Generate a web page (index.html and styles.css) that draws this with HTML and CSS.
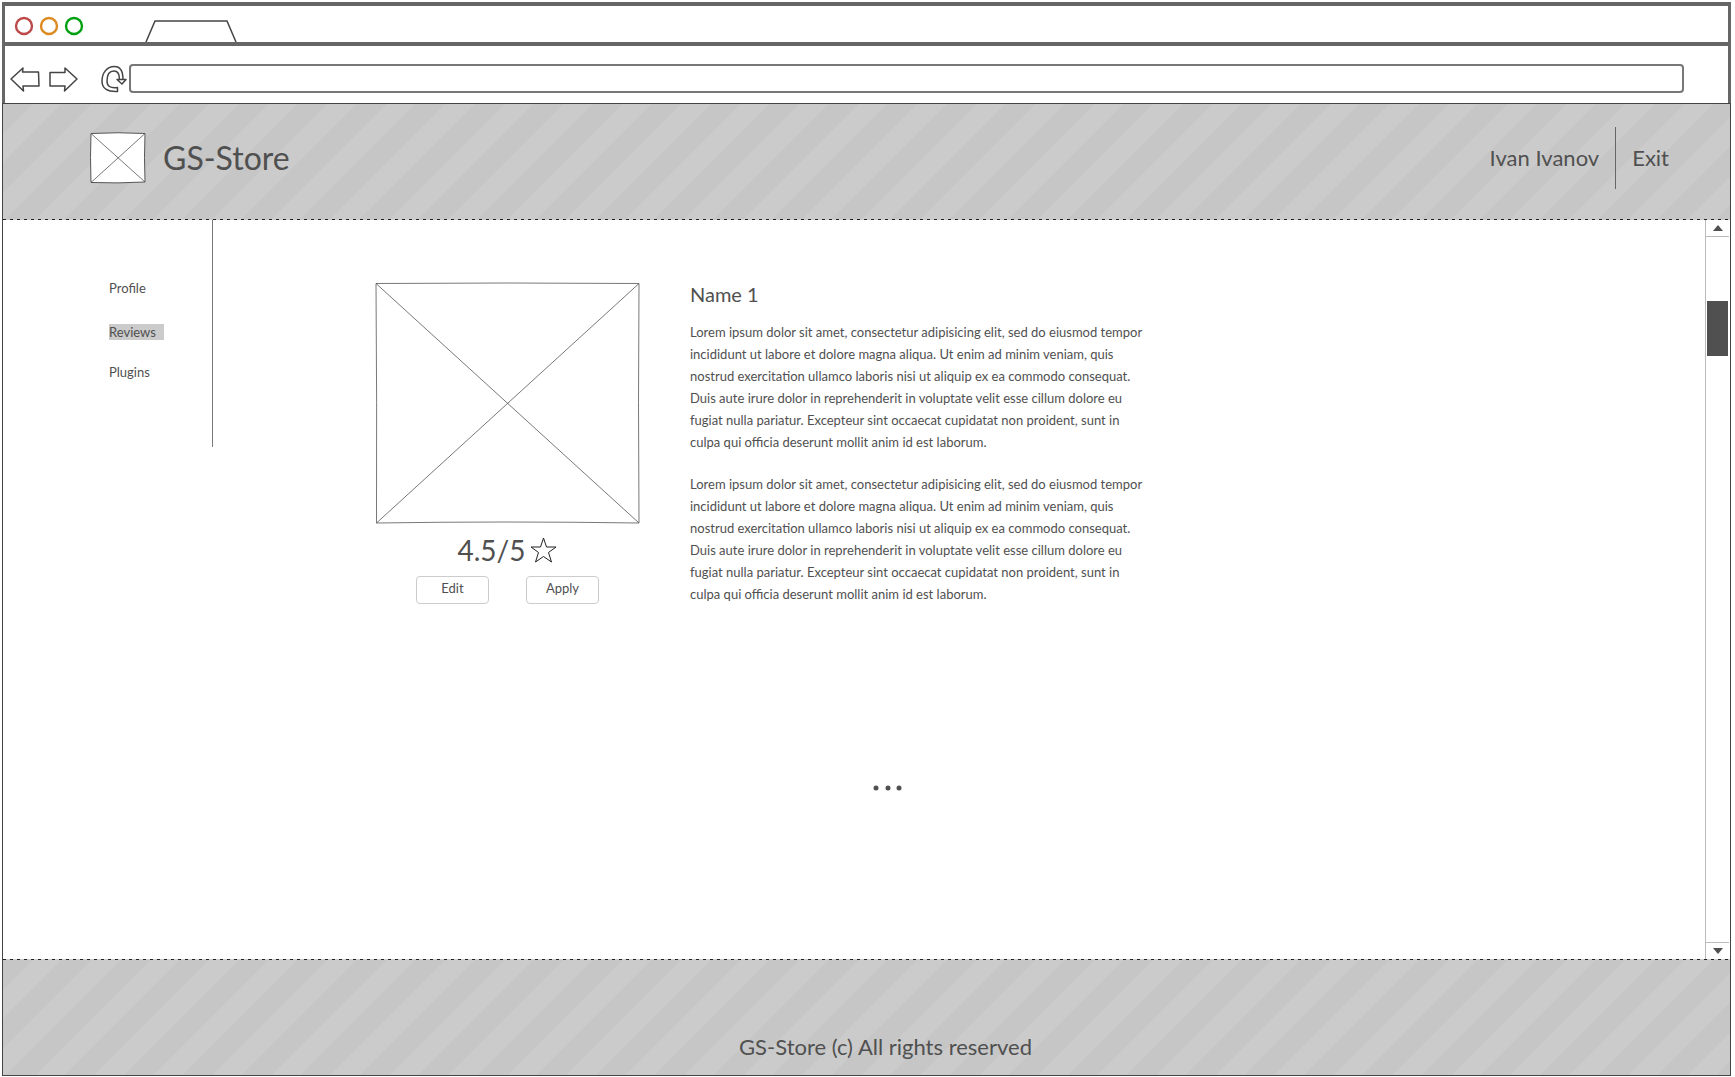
FILE: index.html
```html
<!DOCTYPE html>
<html lang="en">
<head>
<meta charset="utf-8">
<meta name="viewport" content="width=device-width, initial-scale=1">
<title>GS-Store</title>
<link rel="stylesheet" href="styles.css">
</head>
<body>
<div class="window">
  <div class="chrome">
    <div class="titlebar">
      <svg class="lights" width="70" height="20" viewBox="0 0 70 20" fill="none" stroke-width="2.4" aria-hidden="true">
        <circle cx="10" cy="10" r="8" stroke="#bd4a4a"/>
        <circle cx="35" cy="10" r="8" stroke="#dd8a20"/>
        <circle cx="60" cy="10" r="8" stroke="#00a010"/>
      </svg>
      <svg class="tab" width="92" height="22" viewBox="0 0 92 22" fill="none" stroke="#444" stroke-width="1.5" aria-hidden="true">
        <path d="M1 22 L10 1 H82 L91 22"/>
      </svg>
    </div>
    <div class="toolbar">
      <button class="tool" type="button" aria-label="Back">
        <svg width="30" height="26" viewBox="0 0 30 26"><path d="M1 13 L13 2 L12.500 6 H28.500 L29 20 H13 L13.500 25 Z"/></svg>
      </button>
      <button class="tool" type="button" aria-label="Forward">
        <svg width="30" height="26" viewBox="0 0 30 26"><path d="M29 13 L17 2 V6.500 H2 V20 H17 L16.500 25 Z"/></svg>
      </button>
      <button class="tool reload" type="button" aria-label="Reload">
        <svg width="28" height="28" viewBox="0 0 28 28"><path d="M17.500 26.500 V22.500 C10 23.500 7 21 7 16 C7 10 9 6 14 6 C18.500 6 19.500 10 19.500 14.500 H17 L22 19 L26 14.500 H23 C23 6 20 1.500 14.500 1.500 C6 1.500 2 9 2 16 C2 24 8 27 17.500 26.500 Z M17 14.500 H26"/></svg>
      </button>
      <input class="address" type="text" aria-label="Address">
    </div>
  </div>
  <div class="page">
    <header class="header striped">
      <svg class="logo" width="56" height="52" viewBox="0 0 56 52" fill="#fff" stroke="#555" aria-hidden="true">
        <path d="M1 1.500 Q28 0 55 1.500 Q54 25 55 50 Q28 51.500 1 50.500 Q0 25 1 1.500 Z"/>
        <path d="M1 1.500 L55 50 M55 1.500 L1 50.500" stroke-width=".8"/>
      </svg>
      <span class="brand">GS-Store</span>
      <div class="account">
        <a class="account-link" href="#">Ivan Ivanov</a>
        <a class="account-link exit" href="#">Exit</a>
      </div>
    </header>
    <div class="body">
      <nav class="menu">
        <a class="menu-link" href="#">Profile</a>
        <a class="menu-link current" href="#">Reviews</a>
        <a class="menu-link" href="#">Plugins</a>
      </nav>
      <main class="content">
        <article class="item">
          <div class="preview">
            <svg class="picture" width="265" height="242" viewBox="0 0 265 242" fill="none" stroke="#555" stroke-width=".8" aria-hidden="true">
              <path d="M1 1.500 Q130 .5 264 1.500 Q263 120 264 241 Q130 239 1.500 241 Q2 120 1 1.500 Z"/>
              <path d="M1 1.500 L264 241 M264 1.500 L1.500 241"/>
            </svg>
            <div class="rating">
              <span>4.5/5</span>
              <svg width="27" height="26" viewBox="0 0 27 26" fill="none" stroke="#222" aria-hidden="true"><path d="M13.500 1 L16.500 10 H26 L18.500 15.500 L21.500 25 L13.500 19.500 L5.500 25 L8.500 15.500 L1 10 H10.500 Z"/></svg>
            </div>
            <div class="actions">
              <button class="action" type="button">Edit</button>
              <button class="action" type="button">Apply</button>
            </div>
          </div>
          <div class="description">
            <h1 class="name">Name 1</h1>
            <p class="text">Lorem ipsum dolor sit amet, consectetur adipisicing elit, sed do eiusmod tempor<br>incididunt ut labore et dolore magna aliqua. Ut enim ad minim veniam, quis<br>nostrud exercitation ullamco laboris nisi ut aliquip ex ea commodo consequat.<br>Duis aute irure dolor in reprehenderit in voluptate velit esse cillum dolore eu<br>fugiat nulla pariatur. Excepteur sint occaecat cupidatat non proident, sunt in<br>culpa qui officia deserunt mollit anim id est laborum.</p>
            <p class="text">Lorem ipsum dolor sit amet, consectetur adipisicing elit, sed do eiusmod tempor<br>incididunt ut labore et dolore magna aliqua. Ut enim ad minim veniam, quis<br>nostrud exercitation ullamco laboris nisi ut aliquip ex ea commodo consequat.<br>Duis aute irure dolor in reprehenderit in voluptate velit esse cillum dolore eu<br>fugiat nulla pariatur. Excepteur sint occaecat cupidatat non proident, sunt in<br>culpa qui officia deserunt mollit anim id est laborum.</p>
          </div>
        </article>
        <svg class="more" width="30" height="6" viewBox="0 0 30 6" fill="#505050" role="img" aria-label="More items">
          <circle cx="3" cy="3" r="2.500"/><circle cx="15" cy="3" r="2.500"/><circle cx="26" cy="3" r="2.500"/>
        </svg>
      </main>
      <div class="scrollbar">
        <button class="scroll-button" type="button" aria-label="Scroll up"><svg width="10" height="6" viewBox="0 0 10 6"><path d="M5 0 L10 6 H0 Z"/></svg></button>
        <div class="track"><div class="thumb"></div></div>
        <button class="scroll-button down" type="button" aria-label="Scroll down"><svg width="10" height="6" viewBox="0 0 10 6"><path d="M0 0 H10 L5 6 Z"/></svg></button>
      </div>
    </div>
    <footer class="footer striped">GS-Store (c) All rights reserved</footer>
  </div>
</div>
</body>
</html>
```
FILE: styles.css
```css
* { box-sizing: border-box; }

body {
  margin: 0;
  background: #fff;
  color: #505050;
  font-family: Lato, "Liberation Sans", sans-serif;
  font-size: 13px;
}

a { color: inherit; text-decoration: none; }

button { padding: 0; color: inherit; font: inherit; }

svg { display: block; }

.window {
  display: flex;
  flex-direction: column;
  min-height: 100vh;
  padding: 2px 4px 1px 2px;
}

/* Browser frame */
.chrome { border: 3px solid #666; border-top-width: 4px; border-bottom: 0; }

.titlebar {
  display: flex;
  align-items: flex-end;
  gap: 61px;
  height: 40px;
  padding-left: 9px;
  border-bottom: 4px solid #666;
}

.lights { margin-bottom: 6px; }

.toolbar {
  display: flex;
  align-items: center;
  gap: 8px;
  height: 57px;
  padding: 8px 44px 0 5px;
}

.tool { border: 0; background: none; }
.tool svg { fill: #fff; stroke: #444; stroke-width: 1.5; stroke-linejoin: round; }
.reload { margin-left: 14px; margin-right: -8px; }

.address {
  flex: 1;
  min-width: 0;
  height: 29px;
  margin-left: 1px;
  padding: 0 8px;
  border: 2px solid #777;
  border-radius: 4px;
  background: #fff;
  font: inherit;
}

/* Site */
.page {
  display: flex;
  flex: 1;
  flex-direction: column;
  border: 1px solid #444;
}

.striped {
  background-color: #c6c6c6;
  background-image: linear-gradient(135deg, #c6c6c6 25%, #cbcbcb 25%, #cbcbcb 50%, #c6c6c6 50%, #c6c6c6 75%, #cbcbcb 75%);
  background-size: 59px 59px;
}

.header {
  display: flex;
  align-items: center;
  height: 115px;
  padding: 0 61px 8px 87px;
}

.brand { margin-left: 17px; font-size: 32px; }

.account { display: flex; align-items: center; margin-left: auto; }
.account-link { font-size: 22px; line-height: 62px; }
.exit { margin-left: 16px; padding-left: 16px; border-left: 1px solid #666; }

/* Fine dashed rules along the top and bottom edges */
.body {
  display: flex;
  flex: 1;
  padding: 1px 0;
  background-image:
    repeating-linear-gradient(90deg, #222 0 3px, #ccc 3px 7px),
    repeating-linear-gradient(90deg, #222 0 3px, #ccc 3px 7px);
  background-position: top, bottom;
  background-repeat: no-repeat;
  background-size: 100% 1px;
}

.menu {
  display: flex;
  flex-direction: column;
  align-items: flex-start;
  width: 210px;
  height: 227px;
  padding: 60px 0 0 106px;
  border-right: 1px solid #777;
}

.menu-link { margin-bottom: 24px; line-height: 16px; }
.current { width: 55px; margin-top: 4px; background: #cbcbcb; }

.content {
  display: flex;
  flex: 1;
  flex-direction: column;
  gap: 160px;
  padding: 62px 0 0 162px;
}

.item { display: flex; gap: 50px; }

.preview { display: flex; flex-direction: column; align-items: center; }

.rating {
  display: flex;
  align-items: center;
  gap: 5px;
  height: 52px;
  font-size: 28px;
}

.actions { display: flex; gap: 37px; }

.action {
  width: 73px;
  height: 28px;
  padding-bottom: 4px;
  border: 1px solid #ccc;
  border-radius: 4px;
  background: #fff;
}

.name { margin: 0 0 15px; font-size: 20px; font-weight: 400; line-height: 24px; }
.text { margin: 0 0 20px; line-height: 22px; }

.more { margin-left: 498px; }

.scrollbar {
  display: flex;
  flex-direction: column;
  width: 25px;
  padding-right: 1px;
  border-left: 1px solid #bbb;
}

.scroll-button {
  display: grid;
  place-items: center;
  height: 17px;
  border: 0;
  border-bottom: 1px solid #bbb;
  background: #fff;
}

.scroll-button.down { border-top: 1px solid #bbb; border-bottom: 0; }
.scroll-button svg { fill: #505050; }

.track { flex: 1; padding: 64px 1px 0; }
.thumb { height: 55px; background: #505050; }

.footer {
  height: 115px;
  padding: 72px 0 0 38px;
  font-size: 22px;
  line-height: 30px;
  text-align: center;
}
```
